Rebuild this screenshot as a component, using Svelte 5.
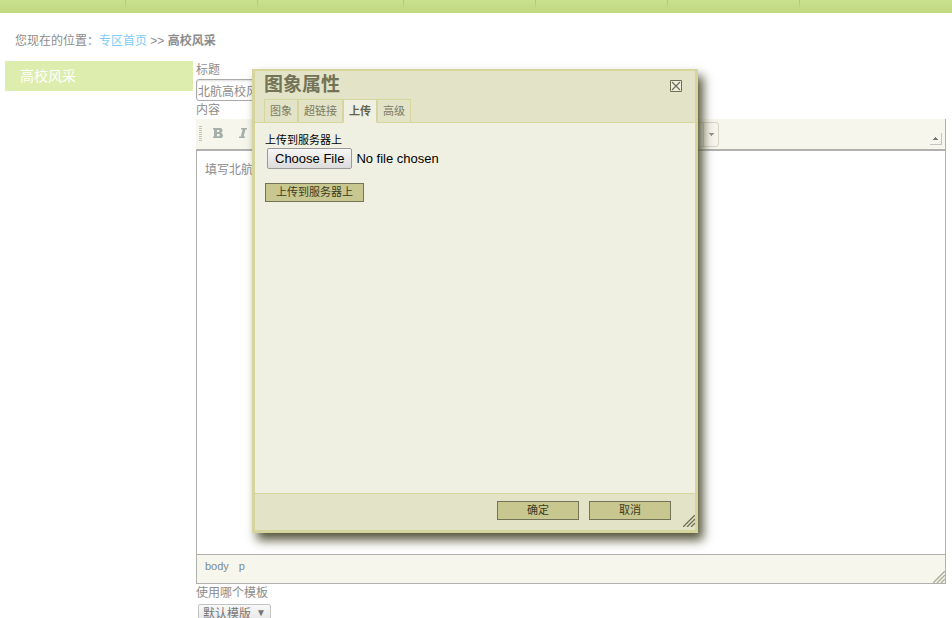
<script>
let title = $state("北航高校风采");
let template = $state("默认模版");
let activeTab = $state("上传");

const navItems = [126, 132, 146, 132, 132, 132];
const tabs = ["图象", "超链接", "上传", "高级"];
</script>

<div class="page">
  <nav class="topbar">
    {#each navItems as width}
      <div class="nav-cell" style="width: {width}px"></div>
    {/each}
  </nav>

  <div class="breadcrumb">
    您现在的位置：<a href="#home">专区首页</a> &gt;&gt; <b>高校风采</b>
  </div>

  <div class="columns">
    <aside>
      <h2>高校风采</h2>
    </aside>

    <main>
      <label for="title">标题</label>
      <input id="title" type="text" bind:value={title} />
      <div class="row-label">内容</div>
      <div class="editor">
        <div class="toolbar">
          <span class="grip"></span>
          <button class="tool" aria-label="加粗">
            <svg width="10" height="10" viewBox="0 0 10 10">
              <path fill-rule="evenodd" fill="#a5b0ac" d="M0 0h7q2.500 0 2.500 2.500q0 1.700-1.500 2.300q2 .5 2 2.600q0 2.600-3 2.600H0V8.500h1V1.500H0zM4 2v2h1.500q1 0 1-1t-1-1zM4 6v2.200h1.700q1.100 0 1.100-1.100T5.700 6z" />
            </svg>
          </button>
          <button class="tool" aria-label="倾斜">
            <svg width="8" height="10" viewBox="0 0 8 10">
              <path fill="#a5b0ac" d="M2 0h6v1.500H6.500L4.600 8.500H6V10H0V8.500h1.800L3.700 1.500H2z" />
            </svg>
          </button>
          <button class="drop" aria-label="样式">
            <svg width="5" height="3" viewBox="0 0 5 3"><path fill="#96968e" d="M0 0h5v1H4v1H3v1H2V2H1V1H0z" /></svg>
          </button>
          <button class="collapse" aria-label="收起工具栏">
            <svg width="5" height="3" viewBox="0 0 5 3"><path fill="#777" d="M2 0h1v1h1v1h1v1H0V2h1V1h1z" /></svg>
          </button>
        </div>
        <div class="content">填写北航高校风采</div>
        <div class="path">
          <a href="#body">body</a>
          <a href="#p">p</a>
          <svg class="resize" width="12" height="12" viewBox="0 0 12 12">
            <path stroke="#b0b09c" stroke-width="1.500" d="M0 12L12 0M4 12l8-8M8 12l4-4" />
          </svg>
        </div>
      </div>
      <label for="template">使用哪个模板</label>
      <div class="select-wrap">
        <select id="template" bind:value={template}>
          <option>默认模版</option>
        </select>
        <span class="arrow">▼</span>
      </div>
    </main>
  </div>

  <div class="dialog" role="dialog" aria-labelledby="dialog-title">
    <header>
      <h1 id="dialog-title">图象属性</h1>
      <button class="close" aria-label="关闭">
        <svg width="12" height="12" viewBox="0 0 12 12">
          <path fill="#f0f0e2" stroke="#6e6e50" d="M.5.5h11v11H.5z" />
          <path stroke="#6e6e50" stroke-width="1.200" d="M2 2l8 8M10 2l-8 8" />
        </svg>
      </button>
      <div class="tabs">
        {#each tabs as tab}
          <button class:active={tab === activeTab} onclick={() => activeTab = tab}>{tab}</button>
        {/each}
      </div>
    </header>
    <div class="panel">
      <label for="upload">上传到服务器上</label>
      <input id="upload" type="file" />
      <button class="btn send">上传到服务器上</button>
    </div>
    <footer>
      <button class="btn">确定</button>
      <button class="btn">取消</button>
      <svg class="resize" width="12" height="12" viewBox="0 0 12 12">
        <path stroke="#6e6e50" stroke-width="1.300" d="M0 12L12 0M4 12l8-8M8 12l4-4" />
      </svg>
    </footer>
  </div>
</div>

<style>
:global(body) {
  overflow: hidden;
  background: #fff;
}

.page {
  position: relative;
  font: 12px/20px "Liberation Sans", "Noto Sans CJK SC", sans-serif;
  color: #8c8c8c;
}

button, input, select {
  font-family: inherit;
  color: inherit;
  box-sizing: border-box;
}

button {
  padding: 0;
}

a {
  text-decoration: none;
}

.topbar {
  display: flex;
  height: 13px;
  background: linear-gradient(#c9e08d, #c0d880);
}

.nav-cell {
  height: 9px;
  background: linear-gradient(#b0c874, #c3da83) right / 1px 100% no-repeat;
}

.breadcrumb {
  padding: 18px 15px 10px;
}

.breadcrumb a {
  color: #7ecbf5;
}

.columns {
  display: flex;
  gap: 3px;
  padding: 0 6px 0 5px;
}

aside {
  width: 188px;
  flex: none;
}

h2 {
  margin: 0;
  padding-left: 15px;
  font-size: 14px;
  font-weight: normal;
  line-height: 30px;
  color: #fff;
  background: #dcedae;
}

main {
  flex: 1;
}

main label, .row-label {
  display: block;
  height: 18px;
  line-height: 18px;
}

#title {
  display: block;
  width: 300px;
  height: 22px;
  padding: 0 1px;
  font-size: 12px;
  border: 1px solid #aaa;
  border-radius: 3px;
  box-shadow: inset 0 1px 2px #ddd;
}

.editor {
  border-right: 1px solid #b0b0ae;
}

.toolbar {
  display: flex;
  align-items: center;
  height: 30px;
  padding: 0 3px;
  background: #f7f6ed;
  border-bottom: 2px solid #b0b0ae;
}

.grip {
  width: 3px;
  height: 16px;
  background: repeating-linear-gradient(#c8c4b0 0 1px, transparent 1px 2px);
}

.tool {
  display: grid;
  place-items: center;
  width: 25px;
  height: 22px;
  margin-bottom: 2px;
  border: 0;
  background: none;
}

.tool:first-of-type {
  margin-left: 3px;
}

.drop {
  width: 464px;
  height: 25px;
  padding-right: 4px;
  text-align: right;
  border: 1px solid #d6d5c8;
  border-radius: 3px;
  background: linear-gradient(#d6d5c8, #d6d5c8) right 14px top / 1px 100% no-repeat;
}

.drop svg {
  vertical-align: middle;
}

.collapse {
  align-self: flex-end;
  display: grid;
  place-items: center;
  width: 12px;
  height: 12px;
  margin: 0 0 4px auto;
  border: solid #c4c4c0;
  border-width: 0 1px 1px 0;
  background: none;
}

.content {
  height: 385px;
  padding: 9px 8px;
  border-left: 1px solid #b0b0ae;
}

.path {
  position: relative;
  display: flex;
  gap: 10px;
  height: 28px;
  padding: 0 8px;
  font-size: 11px;
  line-height: 22px;
  background: #f7f6ed;
  border: solid #b0b0ae;
  border-width: 1px 0 1px 1px;
}

.path a {
  color: #7c8a92;
}

.resize {
  position: absolute;
  right: 0;
  bottom: 0;
}

.select-wrap {
  position: relative;
  width: 73px;
  margin: 2px 2px;
}

select {
  appearance: none;
  display: block;
  width: 100%;
  height: 20px;
  padding: 0 4px;
  font-size: 12px;
  color: #777;
  border: 1px solid #c4c4c4;
  border-radius: 2px;
  background: linear-gradient(#f8f8f8, #e4e4e4);
}

.arrow {
  position: absolute;
  top: -1px;
  right: 5px;
  font-size: 10px;
  color: #777;
  pointer-events: none;
}

.dialog {
  position: absolute;
  top: 69px;
  left: 252px;
  width: 440px;
  border: 3px solid #d5d59d;
  border-top-width: 2px;
  background: #f0f0e2;
  box-shadow: 5px 7px 10px 0 #54543a;
}

header {
  position: relative;
  padding: 0 9px;
  background: #e3e3c7;
  border-bottom: 1px solid #d5d59d;
}

h1 {
  margin: 0;
  font-size: 19px;
  line-height: 28px;
  color: #737357;
}

.close {
  position: absolute;
  top: 9px;
  right: 13px;
  display: block;
  height: 12px;
  border: 0;
  background: none;
}

.close svg {
  display: block;
}

.tabs {
  display: flex;
  margin-bottom: -1px;
}

.tabs button {
  height: 24px;
  padding: 0 5px;
  font-size: 11px;
  line-height: 20px;
  color: #7b7b63;
  border: 1px solid #d5d59d;
  background: none;
}

.tabs button.active {
  font-weight: bold;
  color: #62624a;
  border-bottom-color: #f0f0e2;
  background: #f0f0e2;
}

.panel {
  box-sizing: border-box;
  height: 370px;
  padding: 9px 10px;
  color: #000;
}

.panel label {
  display: block;
  font-size: 11px;
  line-height: 16px;
}

#upload {
  display: block;
  margin: 0 2px;
  font-size: 13px;
}

#upload::file-selector-button {
  height: 21px;
  padding: 0 7px;
  font: inherit;
  border: 1px solid #9a9a9a;
  border-radius: 2px;
  background: linear-gradient(#f6f6f6, #dcdcdc);
}

.btn {
  width: 82px;
  height: 19px;
  font-size: 11px;
  line-height: 17px;
  color: #3b3b1f;
  border: 1px solid #737357;
  background: #c7c78f;
}

.send {
  width: 99px;
  margin-top: 14px;
}

footer {
  position: relative;
  display: flex;
  justify-content: flex-end;
  gap: 10px;
  height: 29px;
  padding: 7px 24px 0 0;
  background: #e3e3c7;
  border-top: 1px solid #d5d59d;
}

footer .resize {
  bottom: 3px;
}
</style>
